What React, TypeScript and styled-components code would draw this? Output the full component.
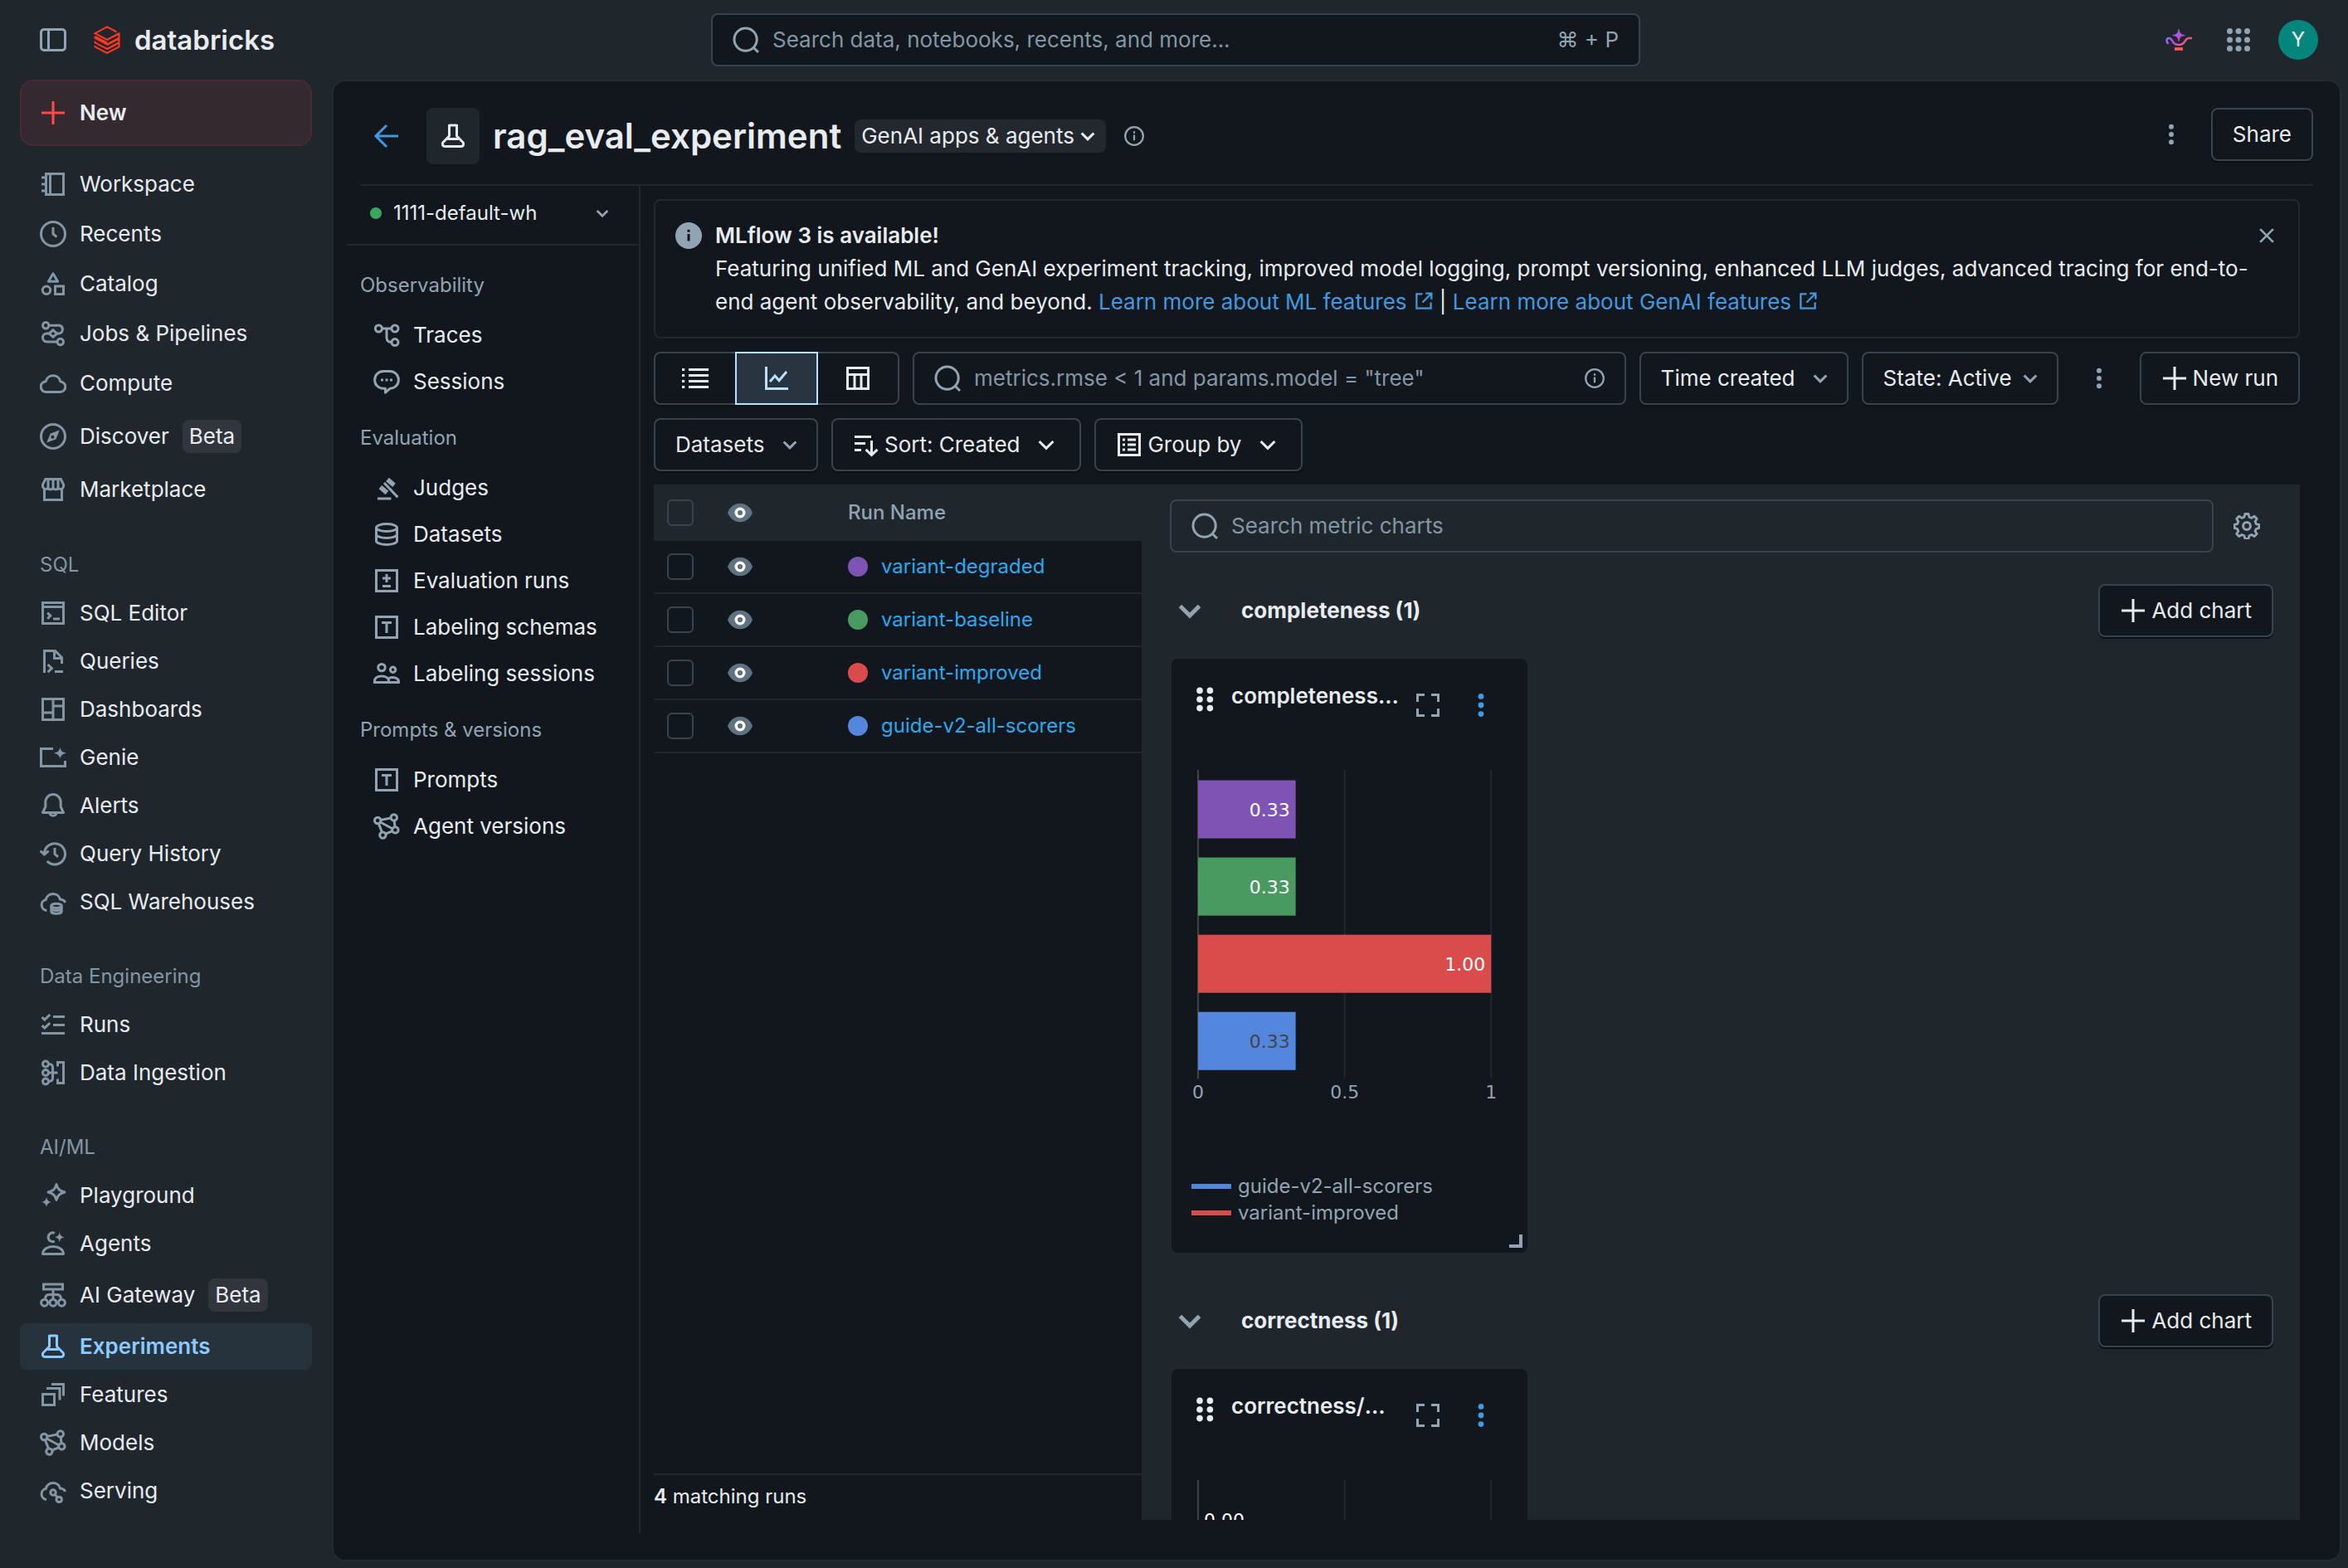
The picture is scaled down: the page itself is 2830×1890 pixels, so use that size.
import React from "react";
import styled, { createGlobalStyle, css } from "styled-components";

const c = {
  chrome: "#1f272d",
  panel: "#11171c",
  line: "#20272e",
  border: "#37444f",
  text: "#e8ecf0",
  muted: "#92a4b3",
  icon: "#8396a5",
  blue: "#4299e0",
  link: "#2ba9f0",
  active: "#8acaff",
};

const GlobalStyle = createGlobalStyle`
  *, *::before, *::after { box-sizing: border-box; }
  body { margin: 0; background: ${c.chrome}; }
  body, button, input, select {
    font-family: Inter, "Liberation Sans", sans-serif;
    font-size: 26px;
    line-height: 40px;
    color: ${c.text};
  }
  button, select, input { margin: 0; padding: 0; border: 0; background: none; outline: none; }
  button { cursor: pointer; }
  a { text-decoration: none; }
  ul { list-style: none; margin: 0; padding: 0; }
  h1, h2, h3, p { margin: 0; font-size: inherit; font-weight: inherit; }
`;

/* ---------- icons ---------- */

const Glyph = styled.svg<{ $size?: number; $color?: string }>`
  flex: none;
  display: block;
  width: ${(p) => p.$size ?? 32}px;
  height: ${(p) => p.$size ?? 32}px;
  color: ${(p) => p.$color ?? "currentColor"};
  fill: none;
  stroke: currentColor;
  stroke-width: 1.5;
`;

const solid = { fill: "currentColor", stroke: "none" };

const icons: Record<string, React.ReactNode> = {
  panelLeft: (
    <>
      <rect x="0.75" y="1.75" width="14.5" height="12.5" rx="1.75" />
      <path d="M5.25 2v12" />
    </>
  ),
  plus: <path d="M8 1v14M1 8h14" />,
  notebook: (
    <path d="M3.75 1.75h10.5v12.5H3.75zM6.25 1.75v12.5M1 4h2.5M1 8h2.5M1 12h2.5" />
  ),
  clock: (
    <>
      <circle cx="8" cy="8" r="7.25" />
      <path d="M8 4v4l2.2 1.8" />
    </>
  ),
  catalog: (
    <>
      <path d="M8 1.9 10.8 6.6H5.2z" strokeLinejoin="round" />
      <circle cx="4" cy="11.9" r="2.35" />
      <rect x="9.25" y="9.5" width="5" height="4.75" />
    </>
  ),
  jobs: (
    <>
      <circle cx="3.6" cy="3.1" r="1.85" />
      <circle cx="12.4" cy="13" r="1.85" />
      <path d="M5.5 3.1h6.2a2.5 2.5 0 0 1 0 4.9h-1.2M10.5 13H4.2a2.5 2.5 0 0 1 0-5h1.3" />
      <path d="M8 5.9 10.4 8 8 10.1 5.6 8z" />
    </>
  ),
  cloud: (
    <path d="M3.9 13.2a3.15 3.15 0 0 1-.3-6.3 4.5 4.5 0 0 1 8.8 0v.1a3.1 3.1 0 0 1-.2 6.2z" strokeLinejoin="round" />
  ),
  compass: (
    <>
      <circle cx="8" cy="8" r="7.25" />
      <path d="M11.9 4.2 9.7 9.8l-5.6 2 2.3-5.6z" {...solid} />
      <circle cx="7.7" cy="8.4" r="1" fill={c.chrome} stroke="none" />
    </>
  ),
  store: (
    <>
      <path d="M2.75 8v6.25h10.5V8" />
      <path d="M3.4 1.75h9.2L14.3 5v1.1a1.9 1.9 0 0 1-3.15 1.2 2.1 2.1 0 0 1-3.15 0 2.1 2.1 0 0 1-3.15 0A1.9 1.9 0 0 1 1.75 6.1V5z" />
      <path d="M5 2v5M8 2v5M11 2v5" />
    </>
  ),
  terminal: (
    <>
      <rect x="1.75" y="1.75" width="12.5" height="12.5" />
      <path d="M1.75 4.25h12.5M8 11.5h4M4.6 7.8 6.4 9.6 4.6 11.4" />
    </>
  ),
  query: (
    <path d="M2.75 15V1.75h6.5l4 4V9.5M8.75 2v4.25H13M4.8 10l2.4 2.3-2.4 2.3M9 14.25h5" />
  ),
  dashboard: (
    <path d="M1.75 1.75h12.5v12.5H1.75zM8 1.75v12.5M1.75 10H8M8 6h6.25" />
  ),
  genie: (
    <>
      <path d="M8 2.75H.75v10.5h14.5V10" />
      <path d="M12.2 2c.5 2 1.2 2.8 3.8 3.4-2.6.6-3.3 1.4-3.8 3.4-.5-2-1.2-2.8-3.8-3.4 2.6-.6 3.3-1.4 3.8-3.4z" {...solid} />
    </>
  ),
  bell: (
    <path d="M8 1.25a4.6 4.6 0 0 0-4.6 4.6v2.9l-1.65 3.5h12.5l-1.65-3.5v-2.9A4.6 4.6 0 0 0 8 1.25zM5.9 12.4a2.15 2.15 0 0 0 4.2 0" strokeLinejoin="round" />
  ),
  history: (
    <>
      <path d="M2.7 7.7A6.3 6.3 0 1 1 4.4 12.5" />
      <path d="M9 4.5v3.7l2 1.7M.3 6.3l2.4 2.2 2.6-2.2" />
    </>
  ),
  cloudDb: (
    <>
      <path d="M4.2 13.2a3.3 3.3 0 0 1-.6-6.5 4.5 4.5 0 0 1 8.7-.2c1.6.1 2.6 1 3.1 1.9" />
      <ellipse cx="10" cy="10.4" rx="3.1" ry="1.3" />
      <path d="M6.9 10.4v3.3c0 .8 1.4 1.4 3.1 1.4s3.1-.6 3.1-1.4v-3.3M6.9 12.2c.6.7 1.8 1 3.1 1s2.5-.3 3.1-1" />
    </>
  ),
  checklist: (
    <path d="M1.3 3.6 2.9 5.1 6.1 2M1.3 8.6 2.9 10.1 6.1 7M8 3.25h7M8 8.25h7M1 13.25h14" />
  ),
  ingestion: (
    <>
      <circle cx="3.5" cy="2.75" r="1.75" />
      <circle cx="3.5" cy="8" r="1.75" />
      <circle cx="3.5" cy="13.25" r="1.75" />
      <path d="M5.25 2.75c3 0 2.5 1.5 2.5 5.25s.5 5.25-2.5 5.25M5.25 8h5.5M10.75 4.25v-2.5h3.5v12.5h-3.5v-2.5" />
    </>
  ),
  sparkle: (
    <>
      <path d="M10 1.3c.8 2.9 1.9 3.9 5 4.7-3.1.8-4.2 1.8-5 4.7-.8-2.9-1.9-3.9-5-4.7 3.1-.8 4.2-1.8 5-4.7z" strokeLinejoin="round" />
      <path d="M4 9c.4 1.9 1.1 2.6 3 3-1.9.4-2.6 1.1-3 3-.4-1.9-1.1-2.6-3-3 1.9-.4 2.6-1.1 3-3z" {...solid} />
    </>
  ),
  agent: (
    <>
      <path d="M1.75 14.25c0-2.8 2.8-4.5 6.25-4.5s6.25 1.7 6.25 4.5z" strokeLinejoin="round" />
      <path d="M8.9 1.7a2.7 2.7 0 1 0 0 4.9" />
      <path d="M11.9 1c.4 2.1 1 2.7 3.1 3.1-2.1.4-2.7 1-3.1 3.1-.4-2.1-1-2.7-3.1-3.1 2.1-.4 2.7-1 3.1-3.1z" {...solid} />
    </>
  ),
  gateway: (
    <>
      <rect x="2.25" y="1.5" width="11.5" height="3" />
      <circle cx="2.8" cy="12.6" r="2" />
      <circle cx="8" cy="12.6" r="2" />
      <circle cx="13.2" cy="12.6" r="2" />
      <path d="M8 4.5v6M3.3 10.5c0-1.7.8-2.75 2.2-2.75h5c1.4 0 2.2 1 2.2 2.75" />
    </>
  ),
  beaker: (
    <path d="M5.75 1.5h4.5M5.75 1v7L1.9 11.9c-.6 1.1-.1 2.35 1.3 2.35h9.6c1.4 0 1.9-1.25 1.3-2.35L10.25 8V1M4.7 9.75h6.6" />
  ),
  features: (
    <path d="M1.75 7.75h7v6.5h-7zM4 4.25h8v7M7 1.75h7.25v7" />
  ),
  models: (
    <>
      <circle cx="2.6" cy="4.5" r="1.85" />
      <circle cx="12.4" cy="2.7" r="1.85" />
      <circle cx="13.2" cy="10.2" r="1.85" />
      <circle cx="5.7" cy="13.3" r="1.85" />
      <path d="M4.4 4.2l6.2-1.2M12.6 4.5l.4 3.9M11.5 10.8l-4.1 1.8M5.2 11.5 3.2 6.3M4.2 5.5l7.4 4" />
    </>
  ),
  cloudModel: (
    <>
      <path d="M4 13.2a3.3 3.3 0 0 1-.4-6.5 4.5 4.5 0 0 1 8.7-.2c1.6.1 2.6 1 3.1 1.9" />
      <circle cx="8" cy="9" r="1.6" />
      <circle cx="11.6" cy="13.2" r="1.6" />
      <path d="M9.1 10.2l1.4 1.7" />
    </>
  ),
  search: (
    <>
      <circle cx="7.8" cy="7.8" r="6.8" />
      <path d="M12.6 12.6 15.5 15.5" />
    </>
  ),
  arrowLeft: <path d="M15 8H2M8 1.5 1.5 8 8 14.5" />,
  chevron: <path d="M3.8 6 8 10.2 12.2 6" />,
  chevronBold: <path d="M3.8 6 8 10.2 12.2 6" strokeWidth="1.8" />,
  info: (
    <>
      <circle cx="8" cy="8" r="7.2" />
      <path d="M8 7v4.5M8 4.2v1.6" />
    </>
  ),
  infoSolid: (
    <>
      <circle cx="8" cy="8" r="8" {...solid} />
      <path d="M8 7v4.3M8 4.4v1.5" stroke={c.panel} />
    </>
  ),
  kebab: (
    <g {...solid}>
      <circle cx="8" cy="2.7" r="1.7" />
      <circle cx="8" cy="8" r="1.7" />
      <circle cx="8" cy="13.3" r="1.7" />
    </g>
  ),
  close: <path d="M3.5 3.5l9 9M12.5 3.5l-9 9" />,
  traces: (
    <>
      <circle cx="3.2" cy="4" r="2" />
      <circle cx="13" cy="4" r="2" />
      <circle cx="13" cy="12.3" r="2" />
      <path d="M5.2 4H11M8 4v5.3c0 2 1 3 3 3" />
    </>
  ),
  sessions: (
    <>
      <path d="M6 1.75h4a5.2 5.2 0 0 1 0 10.4L7.25 14.6v-2.45H6a5.2 5.2 0 0 1 0-10.4z" strokeLinejoin="round" />
      <path d="M4.5 7H6M7.25 7h1.5M10 7h1.5" />
    </>
  ),
  gavel: (
    <>
      <path d="M2.5 14.5h8.2" />
      <path d="M4.2 7.6l4 3.4M8.5 3l4 3.4" strokeWidth="2.8" />
      <path d="M6.5 5l8.2 8.7" />
    </>
  ),
  database: (
    <>
      <ellipse cx="8" cy="4" rx="6.25" ry="2.25" />
      <path d="M1.75 4v8c0 1.25 2.8 2.25 6.25 2.25s6.25-1 6.25-2.25V4M1.75 8c0 1.25 2.8 2.25 6.25 2.25S14.25 9.25 14.25 8" />
    </>
  ),
  plusMinus: (
    <path d="M1.75 1.75h12.5v12.5H1.75zM8 4v5M5.5 6.5h5M5.5 11.25h5" />
  ),
  textBox: (
    <path d="M1.75 1.75h12.5v12.5H1.75zM5 5.25h6M8 5.25v6.25" />
  ),
  users: (
    <>
      <circle cx="5" cy="4.3" r="2.1" />
      <circle cx="11.8" cy="5.6" r="1.6" />
      <path d="M.75 13.25V12.5c0-1.9 1.9-3 4.25-3s4.25 1.1 4.25 3v.75zM9.4 10.7c2.9-1 5.85 0 5.85 2v.55h-6" />
    </>
  ),
  list: (
    <path d="M4 2.75h12M4 6.25h12M4 9.75h12M4 13.25h12M0 2.75h1.6M0 6.25h1.6M0 9.75h1.6M0 13.25h1.6" />
  ),
  lineChart: <path d="M1.75 1v13.25H15M4 10l3-3.5 2.5 2.8L14 4" />,
  tableIcon: (
    <path d="M1.75 1.75h12.5v12.5H1.75zM1.75 5.75h12.5M6 5.75v8.5M10 5.75v8.5" />
  ),
  sort: (
    <path d="M1 3.25h10M1 7.25h6.5M1 11.25h4M11.25 5.5v8.5M7.8 10.9l3.45 3.35 3.45-3.35" />
  ),
  listBox: (
    <path d="M1.75 1.75h12.5v12.5H1.75zM7 5h5M7 8h5M7 11h5M4 5h1.5M4 8h1.5M4 11h1.5" />
  ),
  gear: (
    <>
      <path
        d="M6.9.9h2.2l.5 2 1.5.6 1.8-1.1 1.6 1.6-1.1 1.8.6 1.5 1.9.5v2.1l-1.9.6-.6 1.5 1.1 1.7-1.6 1.6-1.8-1.1-1.5.7-.5 1.9H6.9l-.5-1.9-1.5-.7-1.8 1.1-1.6-1.6 1.1-1.7L2 10.5.1 9.9V7.8L2 7.3l.6-1.5L1.5 4l1.6-1.6 1.8 1.1 1.5-.6z"
        transform="translate(.45 -.1) scale(.94)"
        strokeLinejoin="round"
      />
      <circle cx="8" cy="8" r="2.2" />
    </>
  ),
  expand: <path d="M1.75 6V1.75H6M10 1.75h4.25V6M14.25 10v4.25H10M6 14.25H1.75V10" />,
  external: <path d="M7 2.25H2.25v11.5h11.5V9M9.5 1.75h4.75V6.5M14 2 7 9" />,
  eye: (
    <>
      <path d="M.5 8C1.8 4.6 4.6 2.4 8 2.4s6.2 2.2 7.5 5.6c-1.3 3.4-4.1 5.6-7.5 5.6S1.8 11.4.5 8z" fill="#5f7281" stroke="none" />
      <circle cx="8" cy="8" r="2.4" stroke="#ffffff" strokeWidth="1.7" />
    </>
  ),
  grip: (
    <g {...solid}>
      {[2.7, 8, 13.3].map((y) => (
        <React.Fragment key={y}>
          <circle cx="5" cy={y} r="1.9" />
          <circle cx="11.2" cy={y} r="1.9" />
        </React.Fragment>
      ))}
    </g>
  ),
  apps: (
    <g {...solid}>
      {[2, 8, 14].map((y) =>
        [2, 8, 14].map((x) => <circle key={`${x}-${y}`} cx={x} cy={y} r="2" />)
      )}
    </g>
  ),
};

const Icon = ({ name, size, color }: { name: string; size?: number; color?: string }) => (
  <Glyph viewBox="0 0 16 16" $size={size} $color={color} aria-hidden="true">
    {icons[name]}
  </Glyph>
);

const LampIcon = () => (
  <Glyph viewBox="0 0 16 16" aria-hidden="true">
    <defs>
      <linearGradient id="lamp" gradientUnits="userSpaceOnUse" x1="2" y1="3" x2="12" y2="13">
        <stop offset="0" stopColor="#4a8af4" />
        <stop offset="0.5" stopColor="#cb45e0" />
        <stop offset="1" stopColor="#ff5f46" />
      </linearGradient>
    </defs>
    <path
      d="M8 1.6c.5 2.4 1.1 3.2 3.6 3.7C9.1 5.8 8.6 6.3 8 8.8 7.4 6.3 6.9 5.8 4.4 5.3 6.9 4.8 7.5 4 8 1.6z"
      fill="url(#lamp)"
      stroke="url(#lamp)"
      strokeWidth="0.4"
    />
    <path
      d="M16 7h-2c-1 0-1.4.5-2 1.4C11 10.2 9.8 11 8 11s-3-.8-4-2.6C3.4 7.4 2.9 7 2.2 7 1.2 7 .75 7.6.75 8.5c0 .8.4 1.4 1.1 1.9"
      stroke="url(#lamp)"
      strokeWidth="1.3"
    />
    <rect x="5.5" y="12.6" width="5" height="1.8" fill="#ff5f56" stroke="none" />
  </Glyph>
);

const BrandMark = () => (
  <Glyph viewBox="0 0 32 34" $size={34} $color="#ff3621" aria-hidden="true">
    <path
      strokeWidth="2"
      d="M30 9.5 16 16.9 1.5 9.2 16 1.3l11.5 6.2M1.5 13v2L16 22.5l14.5-7.8V9.5L16 17M1.5 13 16 20.5M1.5 18.5v1.8L16 27.8l14.5-7.7v-4.6L16 23M1.5 24v1.5L16 33l14.5-7.7v-4.6L16 28.3"
    />
  </Glyph>
);

/* ---------- shell ---------- */

const Shell = styled.div`
  height: 100vh;
  display: grid;
  grid-template-rows: 96px minmax(0, 1fr);
  background: ${c.chrome};
  overflow: hidden;
`;

const TopBar = styled.header`
  display: grid;
  grid-template-columns: 1fr minmax(0, 1120px) 1fr;
  align-items: center;
  padding: 0 36px 0 40px;
`;

const TopLeft = styled.div`
  display: flex;
  align-items: center;
  gap: 24px;
`;

const TopRight = styled.div`
  display: flex;
  align-items: center;
  justify-content: flex-end;
  gap: 24px;
`;

const IconButton = styled.button<{ $w?: number; $h?: number; $color?: string }>`
  display: flex;
  align-items: center;
  justify-content: center;
  flex: none;
  width: ${(p) => p.$w ?? 48}px;
  height: ${(p) => p.$h ?? 48}px;
  color: ${(p) => p.$color ?? c.muted};
`;

const Brand = styled.a`
  display: flex;
  align-items: center;
  gap: 16px;
  font-size: 33px;
  font-weight: 600;
  color: ${c.text};
`;

const Avatar = styled.button`
  width: 48px;
  height: 48px;
  border-radius: 50%;
  background: #04867d;
  color: #ffffff;
  font-size: 24px;
`;

const Field = styled.label<{ $grow?: boolean; $clear?: boolean }>`
  display: flex;
  align-items: center;
  gap: 16px;
  min-width: 0;
  height: 64px;
  padding: 0 24px;
  border: 2px solid ${c.border};
  border-radius: 8px;
  background: ${(p) => (p.$clear ? "transparent" : c.panel)};
  color: ${c.muted};
  ${(p) => p.$grow && css`flex: 1;`}
`;

const TextInput = styled.input`
  flex: 1;
  min-width: 0;
  &::placeholder {
    color: ${c.icon};
    opacity: 1;
  }
`;

const Frame = styled.div`
  display: grid;
  grid-template-columns: 400px minmax(0, 1fr);
  min-height: 0;
`;

/* ---------- left sidebar ---------- */

const Sidebar = styled.nav`
  padding: 0 24px;
  overflow: hidden;
`;

const NewButton = styled.button`
  display: flex;
  align-items: center;
  gap: 16px;
  width: 100%;
  height: 80px;
  margin-bottom: 16px;
  padding: 0 22px;
  border: 2px solid #482a30;
  border-radius: 16px;
  background: #33292e;
  font-weight: 600;
`;

const GroupLabel = styled.h2`
  margin-top: 32px;
  padding: 0 24px;
  font-size: 24px;
  line-height: 58px;
  color: ${c.icon};
`;

const NavItem = styled.li<{ $loose?: boolean }>`
  padding: ${(p) => (p.$loose ? 2 : 1)}px 0;
`;

const NavLink = styled.a<{ $active?: boolean; $tall?: boolean }>`
  display: flex;
  align-items: center;
  gap: 16px;
  height: ${(p) => (p.$tall ? 64 : 56)}px;
  padding: 0 24px;
  border-radius: 8px;
  color: ${c.text};
  & > svg {
    color: ${c.icon};
  }
  ${(p) =>
    p.$active &&
    css`
      background: #27333c;
      color: ${c.active};
      font-weight: 600;
      & > svg {
        color: ${c.active};
      }
    `}
`;

const Tag = styled.span`
  padding: 0 8px;
  border-radius: 8px;
  background: #30363c;
  color: ${c.text};
`;

type Entry = { icon: string; label: string; beta?: boolean; active?: boolean };

const groups: { title?: string; items: Entry[] }[] = [
  {
    items: [
      { icon: "notebook", label: "Workspace" },
      { icon: "clock", label: "Recents" },
      { icon: "catalog", label: "Catalog" },
      { icon: "jobs", label: "Jobs & Pipelines" },
      { icon: "cloud", label: "Compute" },
      { icon: "compass", label: "Discover", beta: true },
      { icon: "store", label: "Marketplace" },
    ],
  },
  {
    title: "SQL",
    items: [
      { icon: "terminal", label: "SQL Editor" },
      { icon: "query", label: "Queries" },
      { icon: "dashboard", label: "Dashboards" },
      { icon: "genie", label: "Genie" },
      { icon: "bell", label: "Alerts" },
      { icon: "history", label: "Query History" },
      { icon: "cloudDb", label: "SQL Warehouses" },
    ],
  },
  {
    title: "Data Engineering",
    items: [
      { icon: "checklist", label: "Runs" },
      { icon: "ingestion", label: "Data Ingestion" },
    ],
  },
  {
    title: "AI/ML",
    items: [
      { icon: "sparkle", label: "Playground" },
      { icon: "agent", label: "Agents" },
      { icon: "gateway", label: "AI Gateway", beta: true },
      { icon: "beaker", label: "Experiments", active: true },
      { icon: "features", label: "Features" },
      { icon: "models", label: "Models" },
      { icon: "cloudModel", label: "Serving" },
    ],
  },
];

/* ---------- main panel ---------- */

const Panel = styled.main`
  display: flex;
  flex-direction: column;
  min-width: 0;
  min-height: 0;
  margin: 0 8px 8px 0;
  padding-bottom: 32px;
  border: 2px solid #242b32;
  border-radius: 16px;
  background: ${c.panel};
`;

const PageHeader = styled.div`
  display: flex;
  justify-content: space-between;
  align-items: flex-start;
  margin: 0 32px;
  padding: 32px 0 24px;
  border-bottom: 2px solid ${c.line};
`;

const HeaderSide = styled.div`
  display: flex;
  align-items: center;
  gap: 16px;
`;

const BackLink = styled.a`
  display: flex;
  padding: 0 16px;
  color: ${c.blue};
`;

const TypeBadge = styled.span`
  display: flex;
  align-items: center;
  justify-content: center;
  width: 64px;
  height: 68px;
  border-radius: 8px;
  background: ${c.chrome};
`;

const Title = styled.h1`
  font-size: 42px;
  line-height: 56px;
  font-weight: 600;
`;

const KindSelect = styled.label`
  display: flex;
  align-items: center;
  gap: 2px;
  height: 40px;
  padding: 0 8px;
  border-radius: 8px;
  background: #23282e;
`;

const BareSelect = styled.select<{ $grow?: boolean; $small?: boolean }>`
  appearance: none;
  cursor: pointer;
  ${(p) => p.$small && css`font-size: 24px;`}
  ${(p) => p.$grow && css`flex: 1;`}
`;

const outlined = css`
  display: flex;
  align-items: center;
  justify-content: center;
  flex: none;
  height: 64px;
  border: 2px solid ${c.border};
  border-radius: 8px;
  background: ${c.panel};
  box-shadow: 0 2px 0 #0b0f13;
`;

const OutlineButton = styled.button`
  ${outlined}
  gap: 6px;
  padding: 0 24px;
`;

const MenuLabel = styled.span`
  padding-right: 10px;
`;

const OutlineSelect = styled.label<{ $gap?: number }>`
  ${outlined}
  gap: ${(p) => p.$gap ?? 16}px;
  padding: 0 18px 0 24px;
  color: ${c.muted};
`;

const Body = styled.div`
  flex: 1;
  min-height: 0;
  display: grid;
  grid-template-columns: 354px minmax(0, 1fr);
  margin: 0 32px 0 16px;
`;

const SideNav = styled.nav`
  border-right: 2px solid ${c.line};
`;

const WarehousePicker = styled.label`
  display: flex;
  align-items: center;
  gap: 14px;
  height: 72px;
  padding: 0 32px 4px 28px;
  margin-bottom: 16px;
  border-bottom: 2px solid ${c.line};
  color: ${c.muted};
`;

const StatusDot = styled.span`
  width: 14px;
  height: 14px;
  border-radius: 50%;
  background: #3ba65e;
`;

const SideLabel = styled.h2`
  margin-top: 8px;
  padding-left: 16px;
  font-size: 24px;
  line-height: 64px;
  color: ${c.muted};
`;

const SideLink = styled.a`
  display: flex;
  align-items: center;
  gap: 16px;
  height: 56px;
  padding-left: 32px;
  color: ${c.text};
  & > svg {
    color: ${c.muted};
  }
`;

const sideGroups: { title: string; items: Entry[] }[] = [
  {
    title: "Observability",
    items: [
      { icon: "traces", label: "Traces" },
      { icon: "sessions", label: "Sessions" },
    ],
  },
  {
    title: "Evaluation",
    items: [
      { icon: "gavel", label: "Judges" },
      { icon: "database", label: "Datasets" },
      { icon: "plusMinus", label: "Evaluation runs" },
      { icon: "textBox", label: "Labeling schemas" },
      { icon: "users", label: "Labeling sessions" },
    ],
  },
  {
    title: "Prompts & versions",
    items: [
      { icon: "textBox", label: "Prompts" },
      { icon: "models", label: "Agent versions" },
    ],
  },
];

const Content = styled.section`
  display: flex;
  flex-direction: column;
  gap: 16px;
  min-width: 0;
  min-height: 0;
  padding: 16px;
`;

const Notice = styled.aside`
  display: flex;
  align-items: flex-start;
  padding: 22px 24px;
  border: 2px solid ${c.line};
  border-radius: 8px;
  & > svg {
    margin: 4px 16px 0 0;
  }
`;

const NoticeText = styled.div`
  flex: 1;
`;

const NoticeTitle = styled.h2`
  font-weight: 600;
`;

const TextLink = styled.a`
  color: ${c.blue};
  & > svg {
    display: inline-block;
    vertical-align: -2px;
    margin-left: 8px;
  }
`;

const Toolbar = styled.div`
  display: flex;
  gap: 16px;
`;

const Segments = styled.div`
  display: flex;
  flex: none;
  height: 64px;
  border: 2px solid ${c.border};
  border-radius: 8px;
  box-shadow: 0 2px 0 #0b0f13;
`;

const Segment = styled.button<{ $on?: boolean }>`
  display: flex;
  align-items: center;
  justify-content: center;
  width: 96px;
  ${(p) =>
    p.$on &&
    css`
      width: 100px;
      margin: -2px 0;
      border: 2px solid #bae1fc;
      background: #283540;
      color: #bae1fc;
    `}
`;

const Split = styled.div`
  flex: 1;
  min-height: 0;
  display: grid;
  grid-template-columns: 588px minmax(0, 1fr);
`;

/* ---------- runs table ---------- */

const RunsPane = styled.div`
  display: flex;
  flex-direction: column;
  justify-content: space-between;
  min-height: 0;
`;

const RunsTable = styled.table`
  width: 100%;
  border-collapse: separate;
  border-spacing: 0;
  table-layout: fixed;
  font-size: 24px;
`;

const HeadRow = styled.tr`
  height: 68px;
  background: ${c.chrome};
`;

const RunRow = styled.tr`
  height: 64px;
  & > td {
    border-bottom: 2px solid ${c.line};
  }
`;

const CheckCell = styled.td`
  width: 64px;
  padding: 0 16px;
`;

const EyeCell = styled.td`
  width: 80px;
  padding: 0 16px;
`;

const NameHead = styled.th`
  padding: 0 0 0 90px;
  font-weight: 500;
  text-align: left;
  color: ${c.muted};
`;

const NameCell = styled.td`
  padding: 0 0 0 90px;
`;

const Checkbox = styled.input`
  display: block;
  appearance: none;
  width: 32px;
  height: 32px;
  border: 2px solid ${c.border};
  border-radius: 6px;
`;

const RunLink = styled.a`
  display: flex;
  align-items: center;
  gap: 16px;
  color: ${c.link};
`;

const RunDot = styled.span<{ $color: string }>`
  width: 24px;
  height: 24px;
  border-radius: 50%;
  background: ${(p) => p.$color};
`;

const RunsFooter = styled.p`
  padding: 6px 0 8px;
  border-top: 2px solid ${c.line};
  font-size: 24px;
`;

const Count = styled.strong`
  font-weight: 600;
`;

const runs = [
  { name: "variant-degraded", color: "#7f53b3" },
  { name: "variant-baseline", color: "#489a60" },
  { name: "variant-improved", color: "#da4c4c" },
  { name: "guide-v2-all-scorers", color: "#5387dd" },
];

/* ---------- charts ---------- */

const ChartsPane = styled.div`
  min-height: 0;
  overflow: hidden;
  padding: 18px 32px 0 34px;
  background: ${c.chrome};
`;

const ChartsTools = styled.div`
  display: flex;
  align-items: center;
  gap: 16px;
  margin-bottom: 38px;
  padding-right: 8px;
`;

const ChartSection = styled.section`
  padding-left: 2px;
  margin-bottom: 50px;
`;

const SectionHead = styled.div`
  display: flex;
  align-items: center;
  gap: 40px;
  margin-bottom: 26px;
`;

const SectionTitle = styled.h2`
  flex: 1;
  font-weight: 700;
`;

const CardGrid = styled.div`
  display: grid;
  grid-template-columns: repeat(3, minmax(0, 1fr));
  gap: 20px;
`;

const Card = styled.article`
  position: relative;
  padding-bottom: 32px;
  border-radius: 8px;
  background: ${c.panel};
`;

const CardHead = styled.div`
  display: flex;
  align-items: center;
  height: 104px;
  padding: 8px 24px 0;
`;

const DragArea = styled.div`
  display: flex;
  flex: 1;
  align-items: flex-end;
  gap: 16px;
  min-width: 0;
  padding-bottom: 22px;
`;

const CardTitle = styled.h3`
  flex: 1;
  min-width: 0;
  font-weight: 600;
  overflow: hidden;
  text-overflow: ellipsis;
  white-space: nowrap;
`;

const Plot = styled.svg`
  display: block;
  width: 100%;
  margin-top: 14px;
  font-family: "DejaVu Sans", sans-serif;
  font-size: 22px;
`;

const Legend = styled.ul`
  margin-top: 82px;
  padding-left: 24px;
  font-size: 24px;
`;

const LegendItem = styled.li<{ $color: string }>`
  display: flex;
  align-items: center;
  gap: 8px;
  line-height: 32px;
  color: ${c.muted};
  &::before {
    content: "";
    width: 48px;
    height: 6px;
    background: ${(p) => p.$color};
  }
`;

const ResizeHandle = styled.span`
  position: absolute;
  right: 6px;
  bottom: 6px;
  width: 16px;
  height: 16px;
  border: solid ${c.muted};
  border-width: 0 4px 4px 0;
`;

const PLOT_X = 32;
const PLOT_W = 353;
const BAND = 93;
const BAR = 70;

const BarPlot = ({ values, label }: { values: number[]; label: string }) => (
  <Plot viewBox="0 0 429 420" role="img" aria-label={label}>
    {[0.5, 1].map((t) => (
      <rect key={t} x={PLOT_X + PLOT_W * t - 1} y={16} width={2} height={372} fill={c.line} />
    ))}
    <rect x={PLOT_X - 1} y={16} width={2} height={372} fill="#444444" />
    {values.map((v, i) => {
      const y = 17 + i * BAND + (BAND - BAR) / 2;
      const end = PLOT_X + PLOT_W * v;
      return (
        <g key={runs[i].name}>
          <rect x={PLOT_X} y={y} width={PLOT_W * v} height={BAR} fill={runs[i].color} />
          <text
            x={v > 0 ? end - 7 : end + 7}
            y={y + BAR / 2 + 8}
            textAnchor={v > 0 ? "end" : "start"}
            fill={v > 0 && i === 3 ? "#444444" : "#ffffff"}
          >
            {v.toFixed(2)}
          </text>
        </g>
      );
    })}
    {[0, 0.5, 1].map((t) => (
      <text key={t} x={PLOT_X + PLOT_W * t} y={412} textAnchor="middle" fill={c.muted}>
        {t}
      </text>
    ))}
  </Plot>
);

const sections = [
  { heading: "completeness (1)", title: "completeness/mean", values: [0.333, 0.333, 1, 0.333] },
  { heading: "correctness (1)", title: "correctness/mean", values: [0, 0, 1, 0] },
];

/* ---------- page ---------- */

export default function App() {
  return (
    <Shell>
      <GlobalStyle />
      <TopBar>
        <TopLeft>
          <IconButton type="button" aria-label="Toggle sidebar">
            <Icon name="panelLeft" />
          </IconButton>
          <Brand href="#">
            <BrandMark />
            databricks
          </Brand>
        </TopLeft>
        <Field>
          <Icon name="search" />
          <TextInput
            type="search"
            aria-label="Search workspace"
            placeholder="Search data, notebooks, recents, and more..."
          />
          <span>⌘ + P</span>
        </Field>
        <TopRight>
          <IconButton type="button" aria-label="Assistant">
            <LampIcon />
          </IconButton>
          <IconButton type="button" aria-label="Apps">
            <Icon name="apps" size={28} />
          </IconButton>
          <Avatar type="button">Y</Avatar>
        </TopRight>
      </TopBar>

      <Frame>
        <Sidebar aria-label="Workspace">
          <NewButton type="button">
            <Icon name="plus" color="#ff4b4b" />
            New
          </NewButton>
          {groups.map((group, g) => (
            <React.Fragment key={g}>
              {group.title && <GroupLabel>{group.title}</GroupLabel>}
              <ul>
                {group.items.map((item) => (
                  <NavItem key={item.label} $loose={g === 0}>
                    <NavLink href="#" $active={item.active} $tall={item.beta}>
                      <Icon name={item.icon} />
                      {item.label}
                      {item.beta && <Tag>Beta</Tag>}
                    </NavLink>
                  </NavItem>
                ))}
              </ul>
            </React.Fragment>
          ))}
        </Sidebar>

        <Panel>
          <PageHeader>
            <HeaderSide>
              <BackLink href="#" aria-label="Back">
                <Icon name="arrowLeft" />
              </BackLink>
              <TypeBadge>
                <Icon name="beaker" />
              </TypeBadge>
              <Title>rag_eval_experiment</Title>
              <KindSelect>
                <BareSelect aria-label="Experiment kind">
                  <option>GenAI apps &amp; agents</option>
                </BareSelect>
                <Icon name="chevronBold" size={28} />
              </KindSelect>
              <IconButton type="button" aria-label="Experiment details" $w={36}>
                <Icon name="info" size={24} />
              </IconButton>
            </HeaderSide>
            <HeaderSide>
              <IconButton type="button" aria-label="More actions" $w={64} $h={64}>
                <Icon name="kebab" size={28} />
              </IconButton>
              <OutlineButton type="button">Share</OutlineButton>
            </HeaderSide>
          </PageHeader>

          <Body>
            <SideNav aria-label="Experiment">
              <WarehousePicker>
                <StatusDot />
                <BareSelect aria-label="SQL warehouse" $grow $small>
                  <option>1111-default-wh</option>
                </BareSelect>
                <Icon name="chevronBold" size={24} />
              </WarehousePicker>
              {sideGroups.map((group) => (
                <React.Fragment key={group.title}>
                  <SideLabel>{group.title}</SideLabel>
                  <ul>
                    {group.items.map((item) => (
                      <li key={item.label}>
                        <SideLink href="#">
                          <Icon name={item.icon} />
                          {item.label}
                        </SideLink>
                      </li>
                    ))}
                  </ul>
                </React.Fragment>
              ))}
            </SideNav>

            <Content>
              <Notice>
                <Icon name="infoSolid" color={c.muted} />
                <NoticeText>
                  <NoticeTitle>MLflow 3 is available!</NoticeTitle>
                  <p>
                    Featuring unified ML and GenAI experiment tracking, improved model logging, prompt versioning,
                    enhanced LLM judges, advanced tracing for end-to-end agent observability, and beyond.{" "}
                    <TextLink href="#">
                      Learn more about ML features
                      <Icon name="external" size={24} />
                    </TextLink>{" "}
                    |{" "}
                    <TextLink href="#">
                      Learn more about GenAI features
                      <Icon name="external" size={24} />
                    </TextLink>
                  </p>
                </NoticeText>
                <IconButton type="button" aria-label="Dismiss" $w={28} $h={40}>
                  <Icon name="close" size={28} />
                </IconButton>
              </Notice>

              <Toolbar>
                <Segments>
                  <Segment type="button" aria-label="List view">
                    <Icon name="list" />
                  </Segment>
                  <Segment type="button" aria-label="Chart view" aria-pressed="true" $on>
                    <Icon name="lineChart" />
                  </Segment>
                  <Segment type="button" aria-label="Table view">
                    <Icon name="tableIcon" />
                  </Segment>
                </Segments>
                <Field $grow>
                  <Icon name="search" />
                  <TextInput
                    type="search"
                    aria-label="Filter runs"
                    placeholder={'metrics.rmse < 1 and params.model = "tree"'}
                  />
                  <Icon name="info" size={24} />
                </Field>
                <OutlineSelect>
                  <BareSelect aria-label="Time created">
                    <option>Time created</option>
                  </BareSelect>
                  <Icon name="chevronBold" size={28} />
                </OutlineSelect>
                <OutlineSelect $gap={8}>
                  <BareSelect aria-label="State">
                    <option>State: Active</option>
                  </BareSelect>
                  <Icon name="chevronBold" size={28} />
                </OutlineSelect>
                <IconButton type="button" aria-label="More options" $w={66} $h={64}>
                  <Icon name="kebab" size={28} />
                </IconButton>
                <OutlineButton type="button">
                  <Icon name="plus" />
                  New run
                </OutlineButton>
              </Toolbar>

              <Toolbar>
                <OutlineSelect>
                  <BareSelect aria-label="Datasets">
                    <option>Datasets</option>
                  </BareSelect>
                  <Icon name="chevronBold" size={28} />
                </OutlineSelect>
                <OutlineButton type="button" aria-haspopup="menu">
                  <Icon name="sort" />
                  <MenuLabel>Sort: Created</MenuLabel>
                  <Icon name="chevron" />
                </OutlineButton>
                <OutlineButton type="button" aria-haspopup="menu">
                  <Icon name="listBox" />
                  <MenuLabel>Group by</MenuLabel>
                  <Icon name="chevron" />
                </OutlineButton>
              </Toolbar>

              <Split>
                <RunsPane>
                  <RunsTable>
                    <thead>
                      <HeadRow>
                        <CheckCell>
                          <Checkbox type="checkbox" aria-label="Select all runs" />
                        </CheckCell>
                        <EyeCell>
                          <IconButton type="button" aria-label="Toggle all runs">
                            <Icon name="eye" />
                          </IconButton>
                        </EyeCell>
                        <NameHead>Run Name</NameHead>
                      </HeadRow>
                    </thead>
                    <tbody>
                      {runs.map((run) => (
                        <RunRow key={run.name}>
                          <CheckCell>
                            <Checkbox type="checkbox" aria-label={`Select ${run.name}`} />
                          </CheckCell>
                          <EyeCell>
                            <IconButton type="button" aria-label={`Toggle ${run.name}`}>
                              <Icon name="eye" />
                            </IconButton>
                          </EyeCell>
                          <NameCell>
                            <RunLink href="#">
                              <RunDot $color={run.color} />
                              {run.name}
                            </RunLink>
                          </NameCell>
                        </RunRow>
                      ))}
                    </tbody>
                  </RunsTable>
                  <RunsFooter>
                    <Count>4</Count> matching runs
                  </RunsFooter>
                </RunsPane>

                <ChartsPane>
                  <ChartsTools>
                    <Field $grow $clear>
                      <Icon name="search" />
                      <TextInput type="search" aria-label="Search metric charts" placeholder="Search metric charts" />
                    </Field>
                    <IconButton type="button" aria-label="Chart settings">
                      <Icon name="gear" />
                    </IconButton>
                  </ChartsTools>
                  {sections.map((s) => (
                    <ChartSection key={s.heading}>
                      <SectionHead>
                        <IconButton type="button" aria-label={`Collapse ${s.heading}`} $w={44}>
                          <Icon name="chevronBold" size={44} />
                        </IconButton>
                        <SectionTitle>{s.heading}</SectionTitle>
                        <OutlineButton type="button">
                          <Icon name="plus" />
                          Add chart
                        </OutlineButton>
                      </SectionHead>
                      <CardGrid>
                        <Card>
                          <CardHead>
                            <DragArea>
                              <Icon name="grip" />
                              <CardTitle>{s.title}</CardTitle>
                            </DragArea>
                            <IconButton type="button" aria-label="Full screen" $w={64}>
                              <Icon name="expand" />
                            </IconButton>
                            <IconButton type="button" aria-label="Chart actions" $w={64} $color={c.blue}>
                              <Icon name="kebab" />
                            </IconButton>
                          </CardHead>
                          <BarPlot values={s.values} label={s.title} />
                          <Legend>
                            <LegendItem $color="#5387dd">guide-v2-all-scorers</LegendItem>
                            <LegendItem $color="#da4c4c">variant-improved</LegendItem>
                          </Legend>
                          <ResizeHandle />
                        </Card>
                      </CardGrid>
                    </ChartSection>
                  ))}
                </ChartsPane>
              </Split>
            </Content>
          </Body>
        </Panel>
      </Frame>
    </Shell>
  );
}
